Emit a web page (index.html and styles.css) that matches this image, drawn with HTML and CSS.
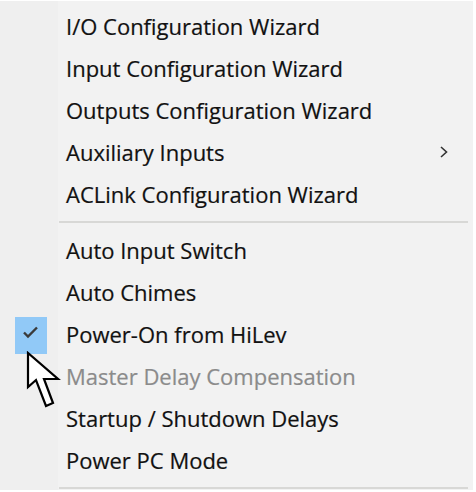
FILE: index.html
```html
<!DOCTYPE html>
<html>
<head>
<meta charset="utf-8">
<link rel="stylesheet" href="styles.css">
</head>
<body>
<div class="menu">
  <div class="item"><span class="gutter"></span><span class="label">I/O Configuration Wizard</span></div>
  <div class="item"><span class="gutter"></span><span class="label">Input Configuration Wizard</span></div>
  <div class="item"><span class="gutter"></span><span class="label">Outputs Configuration Wizard</span></div>
  <div class="item"><span class="gutter"></span><span class="label">Auxiliary Inputs</span>
    <svg class="sub" width="10" height="14" viewBox="0 0 10 14"><path d="M2 2 L7.5 7 L2 12" fill="none" stroke="#333" stroke-width="1.6"/></svg>
  </div>
  <div class="item"><span class="gutter"></span><span class="label">ACLink Configuration Wizard</span></div>
  <div class="sep"></div>
  <div class="item"><span class="gutter"></span><span class="label">Auto Input Switch</span></div>
  <div class="item"><span class="gutter"></span><span class="label">Auto Chimes</span></div>
  <div class="item"><span class="gutter"><span class="checkbox"><svg width="32" height="37" viewBox="0 0 32 37"><path d="M9 15.5 L13 19.5 L22 10.5" fill="none" stroke="#3a3a3a" stroke-width="2.4"/></svg></span></span><span class="label">Power-On from HiLev</span></div>
  <div class="item disabled"><span class="gutter"></span><span class="label">Master Delay Compensation</span></div>
  <div class="item"><span class="gutter"></span><span class="label">Startup / Shutdown Delays</span></div>
  <div class="item"><span class="gutter"></span><span class="label">Power PC Mode</span></div>
  <div class="sep"></div>
  <svg class="cursor" width="40" height="64" viewBox="0 0 40 64">
    <path d="M2 2 L2 36 L10 29 L20 55 L27 52 L18 28 L32 28 Z" fill="#fff" stroke="#000" stroke-width="2.2" stroke-linejoin="miter"/>
  </svg>
</div>
</body>
</html>
```
FILE: styles.css
```css
html, body {
  margin: 0;
  padding: 0;
  background: #ffffff;
}
.menu {
  position: relative;
  margin-top: 1px;
  width: 473px;
  height: 489px;
  box-sizing: border-box;
  padding-top: 4px;
  overflow: hidden;
  background: linear-gradient(to right, #efefef 0, #efefef 58px, #f2f2f2 58px);
  font-family: "Open Sans", "Noto Sans", sans-serif;
  font-size: 22px;
  color: #111111;
  -webkit-text-stroke: 0.2px #111111;
}
.item {
  display: flex;
  align-items: center;
  height: 42px;
}
.gutter {
  width: 66px;
  flex: none;
  align-self: stretch;
  display: flex;
  padding-left: 15px;
  box-sizing: border-box;
}
.checkbox {
  width: 32px;
  height: 37px;
  margin-top: 4px;
  background: #91c9f7;
}
.checkbox svg {
  display: block;
}
.label {
  flex: 1;
  white-space: nowrap;
}
.sub {
  margin-right: 24px;
}
.disabled .label {
  color: #8b8b8b;
  -webkit-text-stroke: 0.2px #8b8b8b;
}
.sep {
  height: 14px;
  margin-left: 59px;
  margin-right: 5px;
  display: flex;
  align-items: center;
}
.sep::before {
  content: "";
  flex: 1;
  height: 2px;
  background: #d8d8d6;
}
.cursor {
  position: absolute;
  left: 26px;
  top: 350px;
}
```
